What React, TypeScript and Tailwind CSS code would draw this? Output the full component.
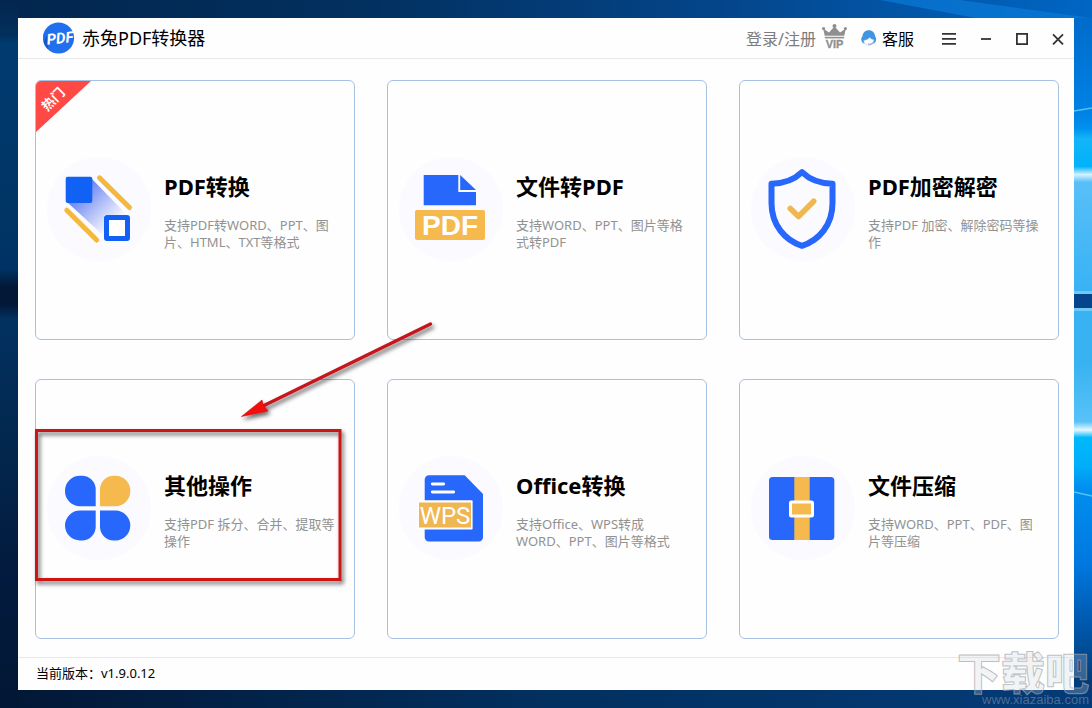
import type { ReactNode } from 'react'

const BLUE = '#2767fb'
const GOLD = '#f5b94e'

function ConvertIcon() {
  return (
    <>
      <defs>
        <linearGradient id="beam" x1="24" y1="26" x2="68" y2="70" gradientUnits="userSpaceOnUse">
          <stop offset="0.15" stopColor="#5f7cf0" />
          <stop offset="0.95" stopColor="#f6f7ff" />
        </linearGradient>
      </defs>
      <path d="M45 22 L80 58 H57 V79 L20 45 Z" fill="url(#beam)" />
      <rect x="18.7" y="19.7" width="26.6" height="26.2" rx="2" fill="#1261f5" />
      <rect x="59.5" y="60.5" width="21" height="21" rx="0.5" fill="#fff" stroke="#1261f5" strokeWidth="5" />
      <path d="M52.5 20.8 L82.5 50.5 M19.8 53.2 L49.6 83" stroke="#f3b83c" strokeWidth="5" strokeLinecap="round" />
    </>
  )
}

function ToPdfIcon() {
  return (
    <>
      <path d="M24.7 18 H59.3 V35 H77 V48.3 H24.7 Z" fill={BLUE} />
      <path d="M61.2 18 L77 33 H61.2 Z" fill={BLUE} />
      <rect x="16" y="53" width="70" height="30" rx="2" fill={GOLD} />
      <text x="51" y="78" textAnchor="middle" fontSize="28" fontWeight="700" fill="#fff" fontFamily="Liberation Sans, sans-serif">
        PDF
      </text>
    </>
  )
}

function ShieldIcon() {
  return (
    <>
      <path
        d="M51 15.2 C43.5 22.5 33 26.6 20.5 26.8 V46 C20.5 68 34 83.5 51 88.8 C68 83.5 81.5 68 81.5 46 V26.8 C69 26.6 58.5 22.5 51 15.2 Z"
        fill="none"
        stroke={BLUE}
        strokeWidth="6"
        strokeLinejoin="round"
      />
      <path d="M39.3 51.5 L47.5 59.5 L62.7 44.3" fill="none" stroke="#f0b74f" strokeWidth="5.6" strokeLinecap="round" strokeLinejoin="round" />
    </>
  )
}

function PetalsIcon() {
  return (
    <g transform="translate(0 1)">
      <path d="M48.7 49.2 H33 A15 15 0 0 1 18 34 A15 15 0 0 1 33 18.8 H35 A13.7 13.7 0 0 1 48.7 32.5 Z" fill={BLUE} />
      <path d="M53 49.2 H68.5 A15 15 0 0 0 83.3 34 A15 15 0 0 0 68.5 18.8 H66.7 A13.7 13.7 0 0 0 53 32.5 Z" fill={GOLD} />
      <path d="M48.7 53.5 H33 A15 15 0 0 0 18 68.5 A15 15 0 0 0 33 83.5 H35 A13.7 13.7 0 0 0 48.7 69.8 Z" fill={BLUE} />
      <path d="M53 53.5 H68.5 A15 15 0 0 1 83.3 68.5 A15 15 0 0 1 68.5 83.5 H66.7 A13.7 13.7 0 0 1 53 69.8 Z" fill={BLUE} />
    </g>
  )
}

function OfficeIcon() {
  return (
    <g transform="translate(0 1)">
      <path d="M30 18.3 H65.7 L84 37 V80 A4.3 4.3 0 0 1 79.7 84.5 H30 A4.3 4.3 0 0 1 25.7 80 V22.6 A4.3 4.3 0 0 1 30 18.3 Z" fill={BLUE} />
      <path d="M33.3 27 H44.7 M33.3 35 H54.7" stroke="#fff" strokeWidth="2.8" strokeLinecap="round" />
      <rect x="19" y="43.3" width="54.6" height="29.2" rx="1" fill="#fff" />
      <rect x="20" y="45.5" width="52" height="25" fill="#f0b651" />
      <text
        x="46"
        y="66.5"
        textAnchor="middle"
        fontSize="24"
        fill="#fff"
        fontFamily="Roboto, Liberation Sans, sans-serif"
      >
        WPS
      </text>
    </g>
  )
}

function CompressIcon() {
  return (
    <g transform="translate(0 1)">
      <rect x="18" y="20" width="65.3" height="63" rx="3.5" fill={BLUE} />
      <rect x="43.3" y="20" width="15.4" height="63" fill={GOLD} />
      <rect x="39.5" y="45" width="22" height="14" rx="1" fill={GOLD} stroke="#fff" strokeWidth="3" />
    </g>
  )
}

interface Tool {
  title: string
  desc: string
  icon: ReactNode
  hot?: boolean
}

const tools: Tool[] = [
  { title: 'PDF转换', desc: '支持PDF转WORD、PPT、图片、HTML、TXT等格式', icon: <ConvertIcon />, hot: true },
  { title: '文件转PDF', desc: '支持WORD、PPT、图片等格式转PDF', icon: <ToPdfIcon /> },
  { title: 'PDF加密解密', desc: '支持PDF 加密、解除密码等操作', icon: <ShieldIcon /> },
  { title: '其他操作', desc: '支持PDF 拆分、合并、提取等操作', icon: <PetalsIcon /> },
  { title: 'Office转换', desc: '支持Office、WPS转成WORD、PPT、图片等格式', icon: <OfficeIcon /> },
  { title: '文件压缩', desc: '支持WORD、PPT、PDF、图片等压缩', icon: <CompressIcon /> },
]

function ToolCard({ tool }: { tool: Tool }) {
  return (
    <button
      type="button"
      className="relative flex items-center gap-[13px] overflow-hidden rounded-md border border-[#a6c1e2] bg-[#fefefe] pr-4 pb-[2px] pl-[11px] text-left"
    >
      {tool.hot && (
        <span className="absolute top-0 left-0">
          <svg width="56" height="52" viewBox="0 0 56 52" aria-hidden="true">
            <path d="M0 0 H55 L0 51 Z" fill="#ff4944" />
          </svg>
          <span className="absolute top-[10px] left-1 -rotate-45 text-[13px] leading-4 font-bold whitespace-nowrap text-white">热门</span>
        </span>
      )}
      <svg width="104" height="104" viewBox="0 0 104 104" fill="none" className="shrink-0" aria-hidden="true">
        <circle cx="52" cy="52" r="52" fill="#fafaff" />
        {tool.icon}
      </svg>
      <span className="flex min-w-0 flex-1 flex-col gap-[17px] pt-1">
        <span className="text-[22px] leading-7 font-bold text-black">{tool.title}</span>
        <span className="text-[13px] leading-[17px] text-[#929292]">{tool.desc}</span>
      </span>
    </button>
  )
}

function Wallpaper() {
  return (
    <svg className="absolute inset-0 h-full w-full" viewBox="0 0 1092 708" preserveAspectRatio="none" aria-hidden="true">
      <defs>
        <linearGradient id="sky">
          <stop offset="0" stopColor="#02264e" />
          <stop offset="0.33" stopColor="#02305f" />
          <stop offset="0.66" stopColor="#04458a" />
          <stop offset="1" stopColor="#0066c4" />
        </linearGradient>
        <linearGradient id="floor">
          <stop offset="0" stopColor="#021735" />
          <stop offset="0.5" stopColor="#02305f" />
          <stop offset="1" stopColor="#043b78" />
        </linearGradient>
        <linearGradient id="left" x2="0" y2="1">
          <stop offset="0" stopColor="#02264e" />
          <stop offset="0.05" stopColor="#02305c" />
          <stop offset="0.06" stopColor="#003b70" />
          <stop offset="0.3" stopColor="#003566" />
          <stop offset="0.38" stopColor="#003265" />
          <stop offset="0.405" stopColor="#021836" />
          <stop offset="0.43" stopColor="#021836" />
          <stop offset="0.45" stopColor="#023160" />
          <stop offset="0.65" stopColor="#02264c" />
          <stop offset="0.8" stopColor="#021b3e" />
          <stop offset="1" stopColor="#021735" />
        </linearGradient>
        <linearGradient id="right" x2="0" y2="1">
          <stop offset="0" stopColor="#006bcb" />
          <stop offset="0.14" stopColor="#0083e6" />
          <stop offset="0.16" stopColor="#0091ee" />
          <stop offset="0.175" stopColor="#14b4f8" />
          <stop offset="0.215" stopColor="#00b2fa" />
          <stop offset="0.227" stopColor="#d4f2ff" />
          <stop offset="0.238" stopColor="#58bff8" />
          <stop offset="0.4" stopColor="#38b2f4" />
          <stop offset="0.5" stopColor="#38b2f0" />
          <stop offset="0.585" stopColor="#58c2f8" />
          <stop offset="0.597" stopColor="#e6f8ff" />
          <stop offset="0.608" stopColor="#00b8fc" />
          <stop offset="0.65" stopColor="#00aef8" />
          <stop offset="0.68" stopColor="#008ff0" />
          <stop offset="0.79" stopColor="#0078e0" />
          <stop offset="0.88" stopColor="#0058ac" />
          <stop offset="0.96" stopColor="#033c7a" />
        </linearGradient>
      </defs>
      <rect width="1092" height="354" fill="url(#sky)" />
      <rect y="354" width="1092" height="354" fill="url(#floor)" />
      <path d="M880 0 L1092 40 V18 L960 0 Z" fill="#0a7ad8" opacity="0.7" />
      <rect width="18" height="708" fill="url(#left)" />
      <rect x="1074" y="18" width="18" height="690" fill="url(#right)" />
      <rect x="1074" y="291" width="18" height="20" fill="#6fcbf5" />
      <rect x="1074" y="294" width="18" height="14" fill="#04458c" />
      <path d="M1074 111 L1092 108 M1074 492 L1092 496" stroke="#4fc4f4" strokeWidth="1.4" />
    </svg>
  )
}

function TitleBar() {
  return (
    <header className="flex h-[41px] items-center justify-between border-b border-[#e8e8ea] pr-[10px] pl-[25px]">
      <div className="flex items-center gap-[7px]">
        <svg width="32" height="32" viewBox="0 0 32 32" aria-hidden="true">
          <circle cx="15.5" cy="16" r="15.6" fill="#1f6fee" />
          <path d="M4 13 L0.6 20 A15.6 15.6 0 0 0 5 27 Z" fill="#1457c8" />
          <text
            x="17"
            y="21.5"
            textAnchor="middle"
            fontSize="15"
            fontWeight="700"
            fontStyle="italic"
            fill="#fff"
            fontFamily="Roboto, Liberation Sans, sans-serif"
            transform="rotate(-6 16 16)"
          >
            PDF
          </text>
        </svg>
        <h1 className="text-lg leading-6 text-black">赤兔PDF转换器</h1>
      </div>

      <div className="flex items-center pt-[2px]">
        <button type="button" className="text-base leading-6 text-[#7c7c7c]">登录/注册</button>
        <button type="button" aria-label="VIP" className="ml-[6px] pb-[6px]">
          <svg width="25" height="25" viewBox="0 0 25 25" fill="#8f8f8f" aria-hidden="true">
            <path d="M1.2 4.6 L7 8.6 L11 4 V3.4 H14 V4 L18 8.6 L23.8 4.6 L22.3 11.8 H2.7 Z" />
            <circle cx="12.5" cy="2" r="2" />
            <circle cx="1.6" cy="4.6" r="1.6" />
            <circle cx="23.4" cy="4.6" r="1.6" />
            <rect x="2.8" y="12.8" width="19.4" height="1.6" />
            <text x="12.5" y="24.4" textAnchor="middle" fontSize="11" fontWeight="700" stroke="#8f8f8f" strokeWidth="0.3" fontFamily="Liberation Sans, sans-serif">
              VIP
            </text>
          </svg>
        </button>
        <button type="button" className="ml-[14px] flex items-center gap-[5px] text-base leading-6 text-black">
          <svg width="16" height="16" viewBox="0 0 16 16" className="mb-[2px]" aria-hidden="true">
            <path d="M0.4 10.6 C0 8.4 0.5 7.4 1.3 6.8 C1.6 2.8 4.2 0.2 7.8 0.2 C11.4 0.2 14 2.8 14.3 6.8 C15.1 7.6 15.3 8.6 15 10.6 C14.6 12.4 13.6 13.4 12.2 13.6 L3.4 13.6 C1.8 13.4 0.8 12.2 0.4 10.6 Z" fill="#4095e2" />
            <path d="M2.8 10.4 C5.4 10.2 7.4 9.2 8.8 7.6 C9.6 8.8 11 9.6 12.8 9.8 C12.8 13.2 10.8 15.4 7.8 15.4 C4.8 15.4 2.8 13.4 2.8 10.4 Z" fill="#fff" stroke="#a9cdf0" strokeWidth="0.6" />
            <path d="M7 14 C8.8 14.8 11 14 12.6 12.2" fill="none" stroke="#4b74d8" strokeWidth="0.8" />
          </svg>
          客服
        </button>

        <div className="ml-[26px] flex items-center gap-6 text-[#333]">
          <button type="button" aria-label="菜单">
            <svg width="16" height="16" viewBox="0 0 16 16" fill="none" stroke="currentColor" strokeWidth="1.8" aria-hidden="true">
              <path d="M2 2.8 H16 M2 7.8 H16 M2 12.8 H16" />
            </svg>
          </button>
          <button type="button" aria-label="最小化">
            <svg width="12" height="12" viewBox="0 0 12 12" fill="none" stroke="currentColor" strokeWidth="1.8" aria-hidden="true">
              <path d="M1 6 H11" />
            </svg>
          </button>
          <button type="button" aria-label="最大化">
            <svg width="12" height="12" viewBox="0 0 12 12" fill="none" stroke="currentColor" strokeWidth="1.8" aria-hidden="true">
              <rect x="0.9" y="0.9" width="10.2" height="10.2" />
            </svg>
          </button>
          <button type="button" aria-label="关闭">
            <svg width="12" height="12" viewBox="0 0 12 12" fill="none" stroke="currentColor" strokeWidth="1.8" aria-hidden="true">
              <path d="M1 1.4 L11 11.4 M11 1.4 L1 11.4" />
            </svg>
          </button>
        </div>
      </div>
    </header>
  )
}

// Red box and arrow drawn over the "其他操作" card
function Annotation() {
  return (
    <svg className="pointer-events-none absolute top-0 left-0" width="460" height="600" viewBox="0 0 460 600" fill="none" aria-hidden="true">
      <defs>
        <filter id="drop" x="-20%" y="-20%" width="140%" height="140%">
          <feDropShadow dx="2" dy="3" stdDeviation="2" floodColor="#000" floodOpacity="0.6" />
        </filter>
      </defs>
      <rect x="36.5" y="430.5" width="303.5" height="149" stroke="#cc1216" strokeWidth="3" filter="url(#drop)" />
      <g filter="url(#drop)">
        <path d="M430.5 324 L264 405.5" stroke="#c4161c" strokeWidth="3.4" strokeLinecap="round" />
        <path d="M241.5 416.5 L262 400 L263.5 405.5 L268 411 Z" fill="#f50a0a" stroke="#c4161c" strokeWidth="0.6" />
      </g>
    </svg>
  )
}

function Watermark() {
  return (
    <svg className="pointer-events-none absolute right-0 bottom-0" width="140" height="64" viewBox="0 0 140 64" aria-hidden="true">
      <text
        x="71"
        y="46"
        textAnchor="middle"
        fontSize="44"
        fontWeight="900"
        fill="#d0d4da"
        fillOpacity="0.25"
        stroke="#a3a7ad"
        strokeOpacity="0.7"
        strokeWidth="1"
        fontFamily="Noto Sans CJK SC, sans-serif"
      >
        下载吧
      </text>
      <text x="137" y="60" textAnchor="end" fontSize="13" fill="#8c98a8" fillOpacity="0.55" fontFamily="Liberation Sans, sans-serif">
        www.xiazaiba.com
      </text>
    </svg>
  )
}

export default function App() {
  return (
    <div className="relative flex min-h-screen flex-col bg-[#02264e] p-[18px] font-['Noto_Sans','Noto_Sans_CJK_SC',sans-serif]" lang="zh-CN">
      <Wallpaper />

      <div className="relative flex flex-1 flex-col bg-[#fefefe]">
        <TitleBar />

        <main className="grid flex-1 grid-cols-3 grid-rows-2 gap-x-8 gap-y-[39px] pt-[21px] pr-[15px] pb-[18px] pl-[17px]">
          {tools.map(tool => (
            <ToolCard key={tool.title} tool={tool} />
          ))}
        </main>

        <footer className="flex h-[33px] items-center border-t border-[#e8e8ea] px-[18px] pb-[2px] text-[13px] leading-4 text-black">
          当前版本：v1.9.0.12
        </footer>
      </div>

      <Annotation />
      <Watermark />
    </div>
  )
}
